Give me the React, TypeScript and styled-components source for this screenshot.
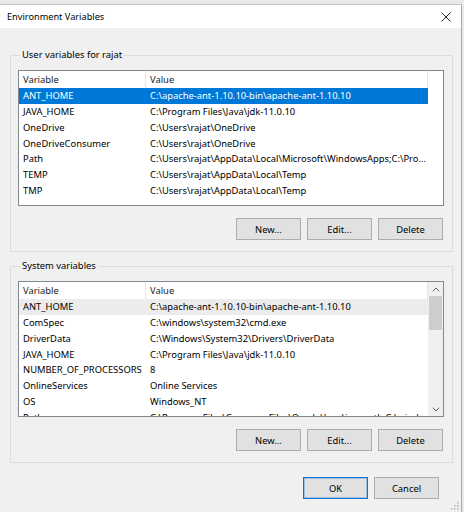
import styled, { createGlobalStyle } from "styled-components"

const GlobalStyle = createGlobalStyle`
  html, body {
    margin: 0;
    padding: 0;
    background: #e9e9e9;
  }
  body {
    font-family: "Noto Sans", "Liberation Sans", sans-serif;
    font-size: 9.4px;
    color: #000;
  }
`

const userVars = [
    { name: "ANT_HOME", value: "C:\\apache-ant-1.10.10-bin\\apache-ant-1.10.10" },
    { name: "JAVA_HOME", value: "C:\\Program Files\\Java\\jdk-11.0.10" },
    { name: "OneDrive", value: "C:\\Users\\rajat\\OneDrive" },
    { name: "OneDriveConsumer", value: "C:\\Users\\rajat\\OneDrive" },
    { name: "Path", value: "C:\\Users\\rajat\\AppData\\Local\\Microsoft\\WindowsApps;C:\\Program Files\\nodejs" },
    { name: "TEMP", value: "C:\\Users\\rajat\\AppData\\Local\\Temp" },
    { name: "TMP", value: "C:\\Users\\rajat\\AppData\\Local\\Temp" },
]

const systemVars = [
    { name: "ANT_HOME", value: "C:\\apache-ant-1.10.10-bin\\apache-ant-1.10.10" },
    { name: "ComSpec", value: "C:\\windows\\system32\\cmd.exe" },
    { name: "DriverData", value: "C:\\Windows\\System32\\Drivers\\DriverData" },
    { name: "JAVA_HOME", value: "C:\\Program Files\\Java\\jdk-11.0.10" },
    { name: "NUMBER_OF_PROCESSORS", value: "8" },
    { name: "OnlineServices", value: "Online Services" },
    { name: "OS", value: "Windows_NT" },
    { name: "Path", value: "C:\\Program Files\\Common Files\\Oracle\\Java\\javapath;C:\\windows\\system32" },
]

const VarList = ({ rows, selected, focused, scroll }) => (
    <ListBox>
        <Grid>
            <HeaderCell>Variable</HeaderCell>
            <HeaderCell>Value</HeaderCell>
            {rows.map(({ name, value }, i) => (
                <Row key={name + i} isSelected={i === selected} isFocused={focused}>
                    <Cell>{name}</Cell>
                    <Cell>{value}</Cell>
                </Row>
            ))}
        </Grid>
        {scroll && (
            <ScrollBar>
                <Arrow>
                    <svg width="8" height="5" viewBox="0 0 8 5">
                        <path d="M0.8 4.3 L4 1 L7.2 4.3" fill="none" stroke="#606060" strokeWidth="1" />
                    </svg>
                </Arrow>
                <Track>
                    <Thumb />
                </Track>
                <Arrow>
                    <svg width="8" height="5" viewBox="0 0 8 5">
                        <path d="M0.8 0.7 L4 4 L7.2 0.7" fill="none" stroke="#606060" strokeWidth="1" />
                    </svg>
                </Arrow>
            </ScrollBar>
        )}
    </ListBox>
)

const App = () => {
    return (
        <>
            <GlobalStyle />
            <Window>
                <TitleBar>
                    <Title>Environment Variables</Title>
                    <CloseIcon width="10" height="10" viewBox="0 0 10 10">
                        <path d="M0.5 0.5 L9.5 9.5 M9.5 0.5 L0.5 9.5" stroke="#1a1a1a" strokeWidth="0.9" />
                    </CloseIcon>
                </TitleBar>
                <Content>
                    <Group>
                        <Legend>User variables for rajat</Legend>
                        <VarList rows={userVars} selected={0} focused={true} scroll={false} />
                        <ButtonRow>
                            <Button>New...</Button>
                            <Button>Edit...</Button>
                            <Button>Delete</Button>
                        </ButtonRow>
                    </Group>
                    <Group>
                        <Legend>System variables</Legend>
                        <VarList rows={systemVars} selected={0} focused={false} scroll={true} />
                        <ButtonRow>
                            <Button>New...</Button>
                            <Button>Edit...</Button>
                            <Button>Delete</Button>
                        </ButtonRow>
                    </Group>
                    <DialogButtons>
                        <Button isDefault>OK</Button>
                        <Button>Cancel</Button>
                    </DialogButtons>
                </Content>
                <Grip width="8" height="8" viewBox="0 0 8 8">
                    <rect x="6" y="0" width="1.5" height="1.5" fill="#b0b0b0" />
                    <rect x="3" y="3" width="1.5" height="1.5" fill="#b0b0b0" />
                    <rect x="6" y="3" width="1.5" height="1.5" fill="#b0b0b0" />
                    <rect x="0" y="6" width="1.5" height="1.5" fill="#b0b0b0" />
                    <rect x="3" y="6" width="1.5" height="1.5" fill="#b0b0b0" />
                    <rect x="6" y="6" width="1.5" height="1.5" fill="#b0b0b0" />
                </Grip>
            </Window>
        </>
    )
}

export default App

const Window = styled.div`
position: relative;
margin-top: 4px;
width: 462px;
height: 508px;
background: #f0f0f0;
border-top: 1px solid #c4c4c4;
border-right: 1px solid #a8a8a8;
box-sizing: border-box;
overflow: hidden;
`
const TitleBar = styled.div`
display: flex;
align-items: center;
justify-content: space-between;
height: 23px;
background: #fff;
padding: 0 10px 0 7px;
`
const Title = styled.span`
font-size: 9.2px;
color: #000;
`
const CloseIcon = styled.svg`
display: block;
`
const Content = styled.div`
display: flex;
flex-direction: column;
padding: 19px 8px 0 10px;
`
const Group = styled.fieldset`
margin: 0 0 6px 0;
padding: 7px 8px 11px 7px;
border: 1px solid #dcdcdc;
min-width: 0;
`
const Legend = styled.legend`
padding: 0 2px;
margin-left: 2px;
line-height: 16px;
font-size: 9.4px;
color: #000;
`
const ListBox = styled.div`
display: flex;
height: 136px;
border: 1px solid #828790;
background: #fff;
box-sizing: border-box;
overflow: hidden;
`
const Grid = styled.div`
display: grid;
grid-template-columns: 127px 282px;
grid-auto-rows: 15.85px;
grid-template-rows: 17px;
align-content: start;
width: 409px;
flex: none;
`
const HeaderCell = styled.div`
padding-left: 4px;
line-height: 18px;
border-right: 1px solid #e5e5e5;
color: #222;
white-space: nowrap;
`
const Row = styled.div`
display: contents;
& > div {
  background: ${props => props.isSelected ? (props.isFocused ? "#0078d7" : "#ececec") : "transparent"};
  color: ${props => props.isSelected && props.isFocused ? "#fff" : "#000"};
}
`
const Cell = styled.div`
padding-left: 4px;
padding-right: 1px;
line-height: 16px;
white-space: nowrap;
overflow: hidden;
text-overflow: ellipsis;
`
const ScrollBar = styled.div`
display: flex;
flex-direction: column;
width: 15px;
background: #f0f0f0;
flex: none;
`
const Arrow = styled.div`
display: flex;
align-items: center;
justify-content: center;
height: 14px;
`
const Track = styled.div`
flex: 1;
padding: 0 1px;
`
const Thumb = styled.div`
height: 34px;
background: #cdcdcd;
`
const ButtonRow = styled.div`
display: flex;
justify-content: flex-end;
gap: 6px;
margin-top: 12px;
padding-right: 1px;
`
const Button = styled.button`
width: 65px;
height: 22px;
padding: 0;
background: #e1e1e1;
border: 1px solid ${props => props.isDefault ? "#0078d7" : "#adadad"};
box-shadow: ${props => props.isDefault ? "inset 0 0 0 1px rgba(0, 120, 215, 0.3)" : "none"};
font-family: "Noto Sans", "Liberation Sans", sans-serif;
font-size: 9.4px;
color: #000;
box-sizing: border-box;
`
const DialogButtons = styled.div`
display: flex;
justify-content: flex-end;
gap: 6px;
margin-top: 8px;
padding-right: 14px;
`
const Grip = styled.svg`
position: absolute;
right: 2px;
bottom: 2px;
`
